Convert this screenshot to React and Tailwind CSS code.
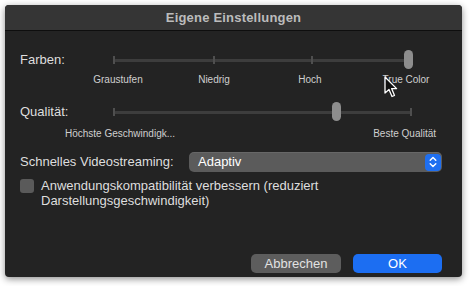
import React from "react";

const font = { fontFamily: "'Liberation Sans', Arial, sans-serif" };

const Slider = ({ width, ticks, knob }) => (
  <div className="relative h-5" style={{ width }}>
    <div className="absolute left-0 right-0 top-[9px] h-[3px] rounded-full bg-[#3d3d3d]" />
    {ticks.map((t) => (
      <div key={t} className="absolute top-[6px] h-[8px] w-[2px] bg-[#4f4f4f]" style={{ left: t - 1 }} />
    ))}
    <div className="absolute top-0 h-[19px] w-[9px] rounded-full bg-[#8d8d8d]" style={{ left: knob - 4 }} />
  </div>
);

const Cursor = () => (
  <svg className="absolute left-[384px] top-[76px]" width="14" height="22" viewBox="0 0 14 22">
    <path d="M1 1 L1 17 L5 13.5 L8 20.5 L10.5 19.5 L7.6 12.6 L12.6 12.6 Z" fill="#111" stroke="#fff" strokeWidth="1.3" strokeLinejoin="round" />
  </svg>
);

export default function App() {
  return (
    <div className="relative w-[471px] h-[286px] bg-white pt-[5px] pl-[5px]" style={font}>
      <div className="w-[457px] h-[272px] rounded-[4px] overflow-hidden bg-[#232323] shadow-[0_2px_7px_rgba(0,0,0,0.45)] flex flex-col">
        <div className="h-[26px] shrink-0 bg-[#353535] border-b border-[#0e0e0e] flex items-center justify-center">
          <span className="text-[13px] font-bold text-[#bcbcbc] tracking-[0.2px]">Eigene Einstellungen</span>
        </div>

        <div className="flex flex-col pl-[15px] pr-[20px] pt-[19px] text-[13px] text-[#dedede]">
          <div className="flex items-center h-5">
            <span className="w-[94px]">Farben:</span>
            <Slider width={294} ticks={[0, 100, 198, 294]} knob={294} />
          </div>
          <div className="grid grid-cols-4 w-[384px] ml-[50px] mt-[2px] h-[14px] items-center text-[10px] text-[#cfcfcf]">
            <span className="text-center">Graustufen</span>
            <span className="text-center">Niedrig</span>
            <span className="text-center">Hoch</span>
            <span className="text-center">True Color</span>
          </div>

          <div className="flex items-center h-5 mt-[16px]">
            <span className="w-[94px]">Qualität:</span>
            <Slider width={298} ticks={[0, 297]} knob={222} />
          </div>
          <div className="flex justify-between mt-[4px] h-[14px] items-center text-[10px] text-[#cfcfcf] pl-[45px] pr-[6px]">
            <span>Höchste Geschwindigk...</span>
            <span>Beste Qualität</span>
          </div>

          <div className="flex items-center mt-[12px] h-[20px]">
            <span className="w-[169px]">Schnelles Videostreaming:</span>
            <div className="flex-1 h-[20px] rounded-[5px] bg-[#5b5b5b] flex items-center justify-between pl-[9px] pr-[1px] shadow-[inset_0_1px_0_rgba(255,255,255,0.08)]">
              <span className="text-white">Adaptiv</span>
              <div className="w-[16px] h-[17px] rounded-[4px] bg-[#1f6ff0] flex items-center justify-center">
                <svg width="8" height="12" viewBox="0 0 8 12" fill="none" stroke="#fff" strokeWidth="1.4" strokeLinecap="round" strokeLinejoin="round">
                  <path d="M1.2 4.3 L4 1.5 L6.8 4.3" />
                  <path d="M1.2 7.7 L4 10.5 L6.8 7.7" />
                </svg>
              </div>
            </div>
          </div>

          <div className="flex mt-[6px]">
            <div className="w-[14px] h-[14px] rounded-[3px] bg-[#5a5a5a] mt-[1px] shrink-0" />
            <p className="ml-[7px] leading-[15px]">
              Anwendungskompatibilität verbessern (reduziert
              <br />
              Darstellungsgeschwindigkeit)
            </p>
          </div>

          <div className="flex justify-end gap-[12px] mt-[46px]">
            <button className="w-[90px] h-[19px] rounded-[5px] bg-[#5d5d5d] text-[13px] text-[#e2e2e2] leading-none">Abbrechen</button>
            <button className="w-[89px] h-[19px] rounded-[5px] bg-[#1c6ef2] text-[13px] text-white leading-none">OK</button>
          </div>
        </div>
      </div>
      <Cursor />
    </div>
  );
}
